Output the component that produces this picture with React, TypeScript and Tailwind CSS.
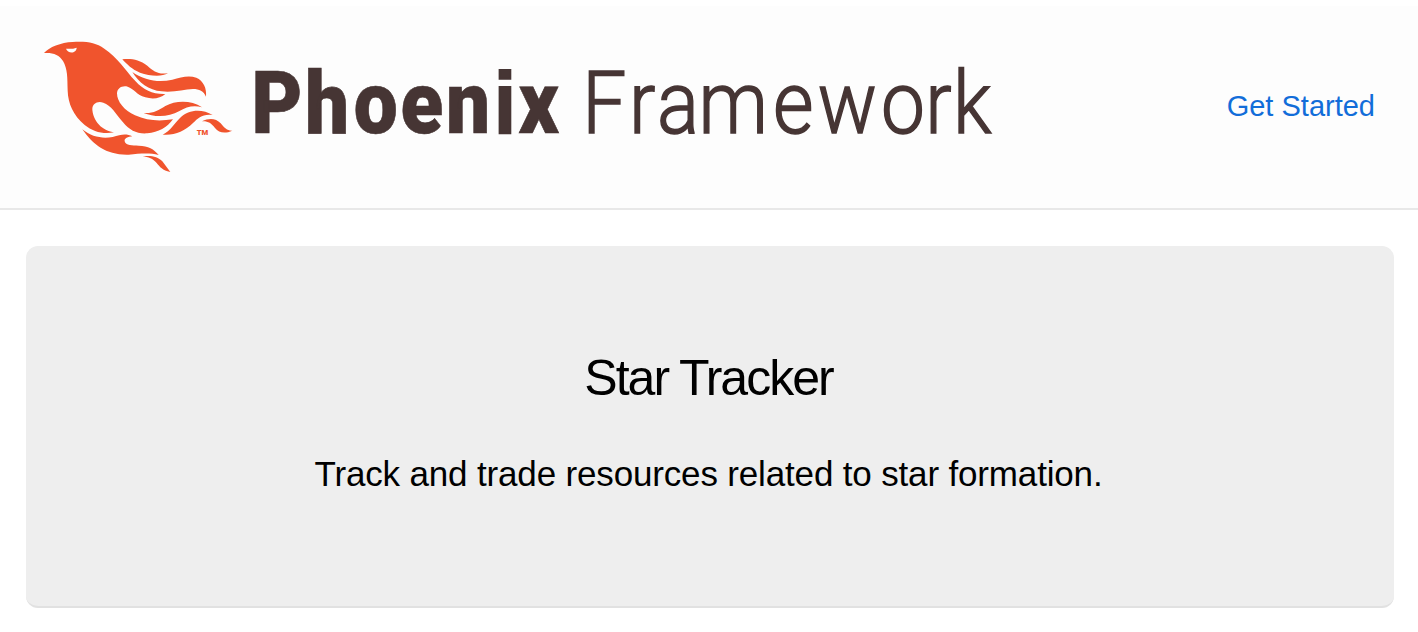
function Bird() {
  return (
    <svg className="h-[150px] w-[210px] shrink-0" viewBox="0 0 630 450" fill="#f0542d" aria-hidden="true">
      <path d="M27 69C42 52 78 37 113 36C158 34 181 38 208 56C248 82 270 120 301 153C327 181 352 193 391 192C376 205 354 209 331 202C304 194 297 176 278 170C260 166 247 175 246 190C246 215 268 242 300 256C337 273 374 274 414 268C397 292 370 307 337 310C305 312 285 302 264 277C243 252 228 225 205 218C187 212 172 221 172 238C173 263 191 300 237 307C205 314 174 305 149 285C115 256 99 220 98 182C97 142 98 117 84 93C73 74 53 67 27 69Z" />
      <path d="M93 56Q110 58 125 53C124 72 98 71 93 56Z" fill="#fdfdfd" />
      <path d="M262 88C289 85 313 89 337 107C356 124 372 135 399 129C380 142 344 138 315 128C291 119 276 103 262 88Z" />
      <path d="M292 126C329 152 372 159 412 149C439 141 462 135 484 143C505 152 516 175 513 200C506 183 493 177 474 177C446 178 417 188 380 184C341 181 311 157 292 126Z" />
      <path d="M326 249C354 251 370 241 391 228C422 211 469 210 501 232C475 225 454 231 432 244C403 261 360 263 326 249Z" />
      <path d="M383 314C407 302 417 282 435 264C461 237 502 236 533 255C502 251 490 264 474 279C448 304 419 317 383 314Z" />
      <path d="M501 274C523 263 543 265 557 280C568 294 577 303 592 302C570 312 552 309 540 294C528 279 519 273 501 274Z" />
      <path d="M142 298C170 322 203 326 233 321C258 313 274 310 292 319C279 321 267 324 269 334C272 347 292 347 311 347C340 348 357 357 371 375C343 368 315 371 281 374C215 376 175 346 142 298Z" />
      <path d="M323 379C348 376 368 379 382 394L406 426C382 421 375 411 365 399C354 386 340 381 323 379Z" />
      <text x="485" y="315" fontFamily="Roboto" fontSize="23" fontWeight="900" textLength="35">TM</text>
    </svg>
  );
}

function Wordmark() {
  return (
    <svg className="h-[150px] w-[760px] shrink-0" viewBox="245 30 760 150" fill="#463534" stroke="#463534">
      <g transform="scale(.9 1)" fontFamily="Roboto, sans-serif" fontSize="87">
        <text y="133" fontWeight="900" strokeWidth="0.6" x="279.5 339 393 445 495.5 549 576">
          Phoen
          <tspan fontFamily="Liberation Sans" fontWeight="700" fontSize="88" strokeWidth="2">i</tspan>
          x
        </text>
        <text y="133" fontWeight="300" strokeWidth="1.5" x="647 699 730 776 859 908.5 979 1028 1059">Framework</text>
      </g>
    </svg>
  );
}

export default function App() {
  return (
    <div className="h-[632px] overflow-hidden bg-white pt-[6px] font-['Liberation_Sans',Arial,sans-serif] text-black">
      <header className="flex h-[204px] items-start border-b-2 border-[#e8e8e8] bg-[#fdfdfd] pt-6 pr-[43px] pl-[35px]">
        <a className="flex" href="#" aria-label="Phoenix Framework">
          <Bird />
          <Wordmark />
        </a>
        <nav className="ml-auto pt-[58px]">
          <a href="#" className="block text-[29px] leading-9 whitespace-nowrap text-[#126dd9]">Get Started</a>
        </nav>
      </header>
      <main className="px-[26px] pr-6 pt-9">
        <section className="flex h-[362px] flex-col items-center rounded-xl border-b-2 border-[#e1e1e1] bg-[#eeeeee] pt-[102px] pr-[3px]">
          <h1 className="text-[50px] leading-[60px] tracking-[-2px] whitespace-nowrap">Star Tracker</h1>
          <p className="mt-[43px] text-[35px] leading-[46px] tracking-[-0.16px] whitespace-nowrap">Track and trade resources related to star formation.</p>
        </section>
      </main>
    </div>
  );
}
